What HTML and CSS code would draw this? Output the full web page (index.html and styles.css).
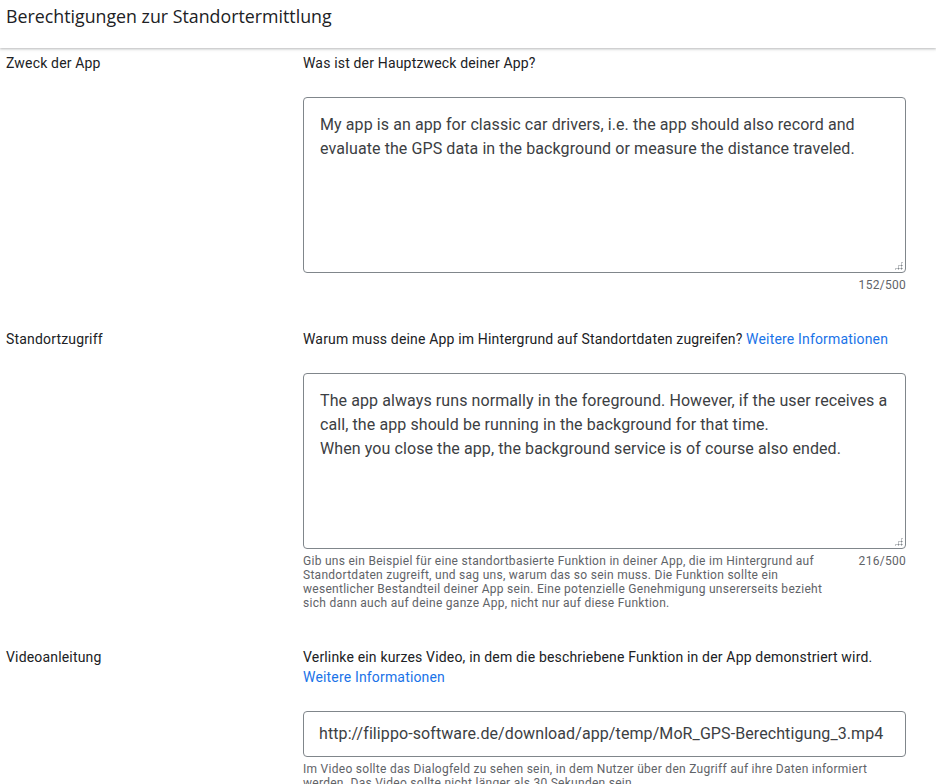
FILE: index.html
```html
<!DOCTYPE html>
<html lang="de">
<head>
<meta charset="utf-8">
<title>Berechtigungen zur Standortermittlung</title>
<link rel="stylesheet" href="styles.css">
</head>
<body>
<header class="header">
  <h1 class="title">Berechtigungen zur Standortermittlung</h1>
</header>
<main class="content">
  <section class="row">
    <div class="label">Zweck der App</div>
    <div class="field">
      <div class="question">Was ist der Hauptzweck deiner App?</div>
      <div class="textarea">My app is an app for classic car drivers, i.e. the app should also record and evaluate the GPS data in the background or measure the distance traveled.<span class="grip"></span></div>
      <div class="meta">
        <div class="helper"></div>
        <div class="counter">152/500</div>
      </div>
    </div>
  </section>
  <section class="row">
    <div class="label">Standortzugriff</div>
    <div class="field">
      <div class="question">Warum muss deine App im Hintergrund auf Standortdaten zugreifen? <a class="link" href="#">Weitere Informationen</a></div>
      <div class="textarea">The app always runs normally in the foreground. However, if the user receives a call, the app should be running in the background for that time.<br>When you close the app, the background service is of course also ended.<span class="grip"></span></div>
      <div class="meta">
        <div class="helper">Gib uns ein Beispiel für eine standortbasierte Funktion in deiner App, die im Hintergrund auf<br>Standortdaten zugreift, und sag uns, warum das so sein muss. Die Funktion sollte ein<br>wesentlicher Bestandteil deiner App sein. Eine potenzielle Genehmigung unsererseits bezieht<br>sich dann auch auf deine ganze App, nicht nur auf diese Funktion.</div>
        <div class="counter">216/500</div>
      </div>
    </div>
  </section>
  <section class="row">
    <div class="label">Videoanleitung</div>
    <div class="field">
      <div class="question">Verlinke ein kurzes Video, in dem die beschriebene Funktion in der App demonstriert wird.<br><a class="link" href="#">Weitere Informationen</a></div>
      <div class="input">http://filippo-software.de/download/app/temp/MoR_GPS-Berechtigung_3.mp4</div>
      <div class="meta">
        <div class="helper">Im Video sollte das Dialogfeld zu sehen sein, in dem Nutzer über den Zugriff auf ihre Daten informiert<br>werden. Das Video sollte nicht länger als 30 Sekunden sein.</div>
      </div>
    </div>
  </section>
</main>
</body>
</html>
```
FILE: styles.css
```css
* { box-sizing: border-box; }
html, body { margin: 0; padding: 0; background: #fff; }
body {
  font-family: Roboto, "Liberation Sans", Arial, sans-serif;
  color: #202124;
  font-size: 14px;
  line-height: 20px;
  letter-spacing: 0.17px;
  overflow: hidden;
  height: 784px;
}
.header {
  height: 48px;
  padding: 4px 6px 0;
  box-shadow: 0 1px 2px rgba(60,64,67,0.25), 0 2px 3px rgba(60,64,67,0.1);
  position: relative;
  z-index: 1;
  background: #fff;
}
.title {
  margin: 0;
  font-family: "Open Sans", Roboto, sans-serif;
  font-weight: 400;
  font-size: 17.8px;
  line-height: 24px;
  color: #202124;
  letter-spacing: 0;
}
.content { padding: 5px 30px 0 6px; }
.row { display: flex; margin-bottom: 37px; }
.label { width: 297px; flex: none; }
.field { width: 603px; flex: none; }
.question { margin-bottom: 24px; }
.link { color: #1a73e8; text-decoration: none; }
.textarea {
  position: relative;
  height: 176px;
  border: 1px solid #80868b;
  border-radius: 4px;
  padding: 15px 16px;
  font-size: 16px;
  line-height: 24px;
  letter-spacing: 0.09px;
  color: #3c4043;
}
.grip {
  position: absolute;
  right: 2px;
  bottom: 2px;
  width: 9px;
  height: 9px;
  background:
    radial-gradient(circle, #80868b 0.9px, transparent 1.1px) 0 0 / 3px 3px;
  clip-path: polygon(100% 0, 100% 100%, 0 100%);
}
.input {
  height: 46px;
  border: 1px solid #80868b;
  border-radius: 4px;
  padding: 0 15px;
  font-size: 16px;
  line-height: 44px;
  letter-spacing: 0.09px;
  color: #3c4043;
  white-space: nowrap;
  overflow: hidden;
}
.meta {
  display: flex;
  justify-content: space-between;
  gap: 12px;
  margin-top: 5px;
  font-size: 12px;
  line-height: 14px;
  letter-spacing: 0.28px;
  color: #5f6368;
}
.helper { flex: 1; white-space: nowrap; }
.counter { flex: none; }
```
